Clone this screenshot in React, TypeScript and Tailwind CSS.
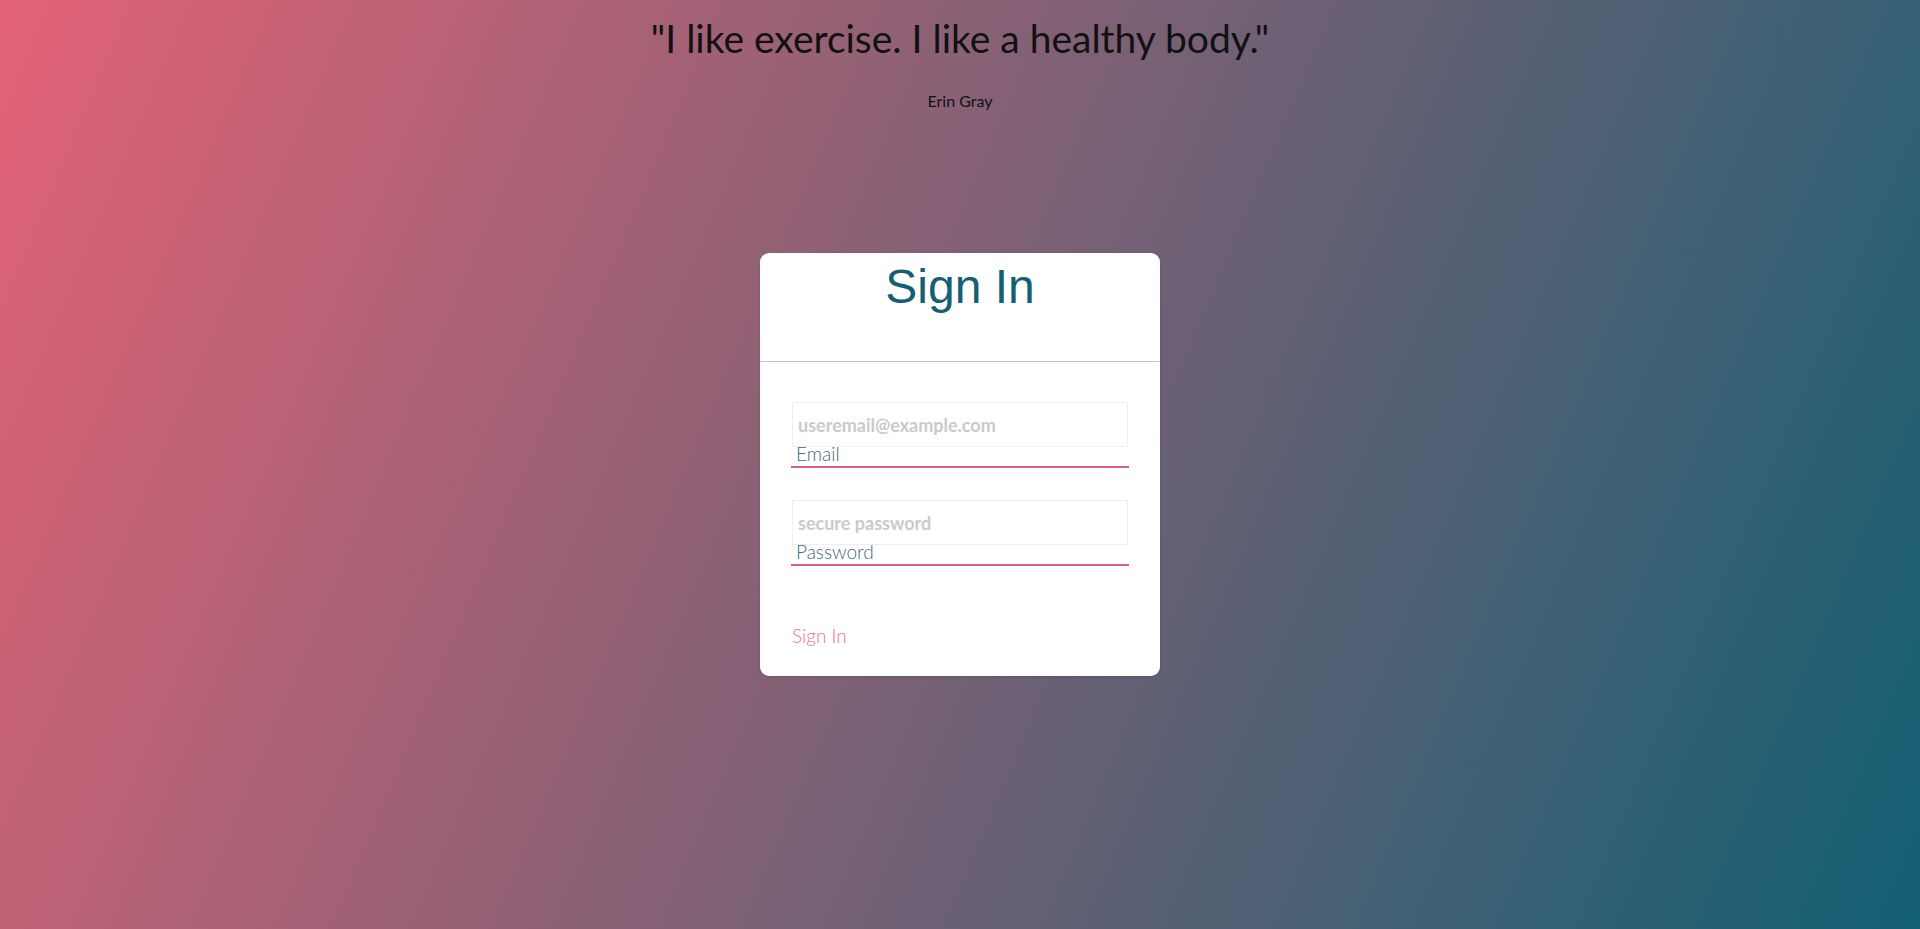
export default function App() {
  return (
    <div className="min-h-screen w-full bg-[linear-gradient(113deg,#e36276,#125f73)] font-['Lato',sans-serif] text-[#111]">
      <div className="flex flex-col items-center pt-[15px]">
        <h2 className="text-[39px] leading-[46px] font-normal">"I like exercise. I like a healthy body."</h2>
        <p className="mt-[30px] text-[16px] leading-[20px]">Erin Gray</p>
      </div>

      <div className="mx-auto mt-[142px] w-[400px] rounded-[9px] bg-white shadow-sm">
        <div className="h-[109px] border-b border-[#c4c4c4] pt-[6px] text-center">
          <h1 className="font-['Liberation_Sans',Arial,sans-serif] text-[48px] leading-[55px] text-[#155f74]">Sign In</h1>
        </div>

        <form className="px-[31px] pt-[40px] pb-[28px]" onSubmit={(e) => e.preventDefault()}>
          <div className="border-b-2 border-[#e0607a]">
            <input
              type="email"
              placeholder="useremail@example.com"
              className="mx-[1px] block h-[45px] w-[336px] border border-[#eeeeee] px-[5px] text-[18px] font-bold text-[#555] outline-none placeholder:text-[#cacaca]"
            />
            <label className="block h-[19px] pl-[5px] text-[19px] font-light leading-[14px] text-[#3a6a80]">Email</label>
          </div>

          <div className="mt-[32px] border-b-2 border-[#e0607a]">
            <input
              type="password"
              placeholder="secure password"
              className="mx-[1px] block h-[45px] w-[336px] border border-[#eeeeee] px-[5px] text-[18px] font-bold text-[#555] outline-none placeholder:text-[#cacaca]"
            />
            <label className="block h-[19px] pl-[5px] text-[19px] font-light leading-[14px] text-[#3a6a80]">Password</label>
          </div>

          <button type="submit" className="mt-[58px] block pl-[1px] text-[19px] font-light leading-[24px] text-[#e97391]">
            Sign In
          </button>
        </form>
      </div>
    </div>
  );
}
